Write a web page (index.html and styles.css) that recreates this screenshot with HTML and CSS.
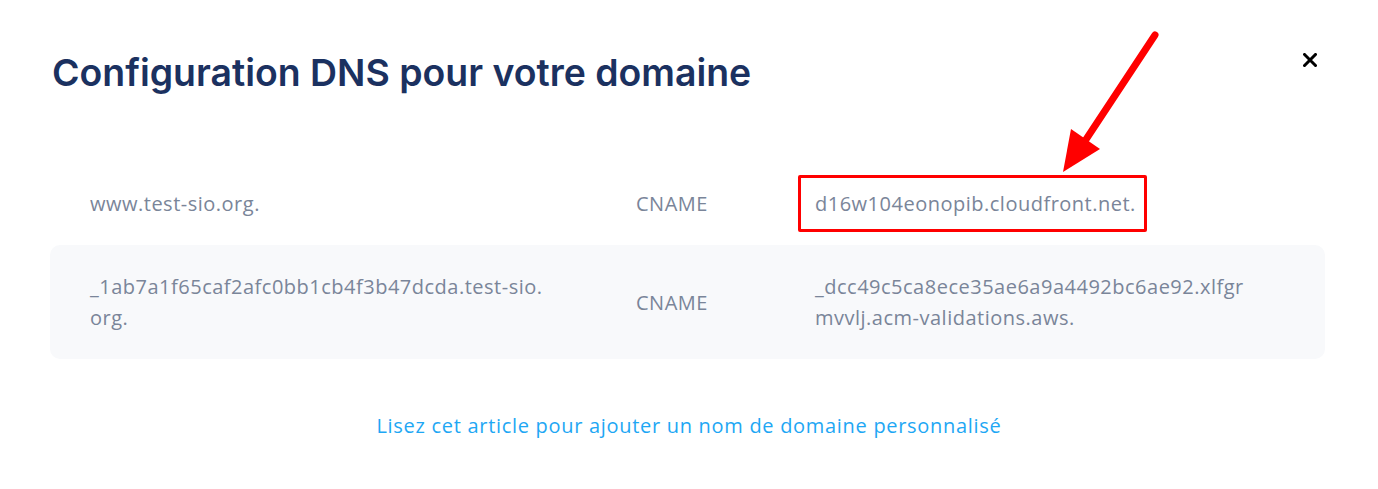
FILE: index.html
```html
<!DOCTYPE html>
<html lang="fr">
  <head>
    <meta charset="utf-8">
    <meta name="viewport" content="width=device-width, initial-scale=1">
    <title>Configuration DNS</title>
    <link rel="stylesheet" href="styles.css">
  </head>
  <body>
    <div class="modal">
      <div class="modal-header">
        <h1>Configuration DNS pour votre domaine</h1>
        <button class="close" aria-label="Fermer">
          <svg width="14" height="14" viewBox="0 0 14 14">
            <path d="M1.5 1.5 L12.5 12.5 M12.5 1.5 L1.5 12.5" stroke="#000" stroke-width="3" stroke-linecap="square"/>
          </svg>
        </button>
      </div>
      <div class="records">
        <div class="record">
          <span class="name">www.test-sio.org.</span>
          <span class="type">CNAME</span>
          <span class="value"><span class="highlight">d16w104eonopib.cloudfront.net.</span></span>
        </div>
        <div class="record alt">
          <span class="name">_1ab7a1f65caf2afc0bb1cb4f3b47dcda.test-sio.org.</span>
          <span class="type">CNAME</span>
          <span class="value">_dcc49c5ca8ece35ae6a9a4492bc6ae92.xlfgrmvvlj.acm-validations.aws.</span>
        </div>
      </div>
      <p class="help"><a href="#">Lisez cet article pour ajouter un nom de domaine personnalisé</a></p>
    </div>
    <svg class="arrow" width="120" height="160" viewBox="0 0 120 160">
      <line x1="102" y1="9" x2="30" y2="118" stroke="#f00" stroke-width="7" stroke-linecap="round"/>
      <polygon points="10,146 18,103 47,123" fill="#f00"/>
    </svg>
  </body>
</html>
```

FILE: styles.css
```css
body {
  margin: 0;
  font-family: "Open Sans", sans-serif;
  background: #fff;
}

.modal {
  padding: 0 61px 0 50px;
}

.modal-header {
  display: flex;
  justify-content: space-between;
  align-items: flex-start;
  padding-top: 48px;
}

h1 {
  margin: 0 0 0 2px;
  font-family: "Inter", sans-serif;
  font-weight: 600;
  font-size: 37.4px;
  line-height: 50px;
  color: #1b3160;
}

.close {
  border: 0;
  background: none;
  padding: 0;
  margin-top: 5px;
  width: 14px;
  height: 14px;
  display: flex;
}

.records {
  margin-top: 64px;
  margin-right: -8px;
}

.record {
  display: grid;
  grid-template-columns: 546px 179px 1fr;
  align-items: center;
  padding: 26px 40px;
  font-size: 20px;
  letter-spacing: 0.5px;
  line-height: 31px;
  color: #7a8599;
  border-radius: 10px;
}

.record.alt {
  background: #f8f9fb;
}

.name {
  padding-right: 88px;
  word-break: break-all;
}

.value {
  max-width: 436px;
  word-break: break-all;
}

.highlight {
  display: inline-block;
  margin: -14px 0 -14px -17px;
  padding: 10px 8px 10px 14px;
  border: 3px solid #f00;
  border-radius: 2px;
  white-space: nowrap;
}

.help {
  margin: 53px 0 0 11px;
  text-align: center;
  font-size: 20px;
  letter-spacing: 0.7px;
}

.help a {
  color: #1ea7f4;
  text-decoration: none;
}

.arrow {
  position: absolute;
  left: 1053px;
  top: 26px;
}
```
